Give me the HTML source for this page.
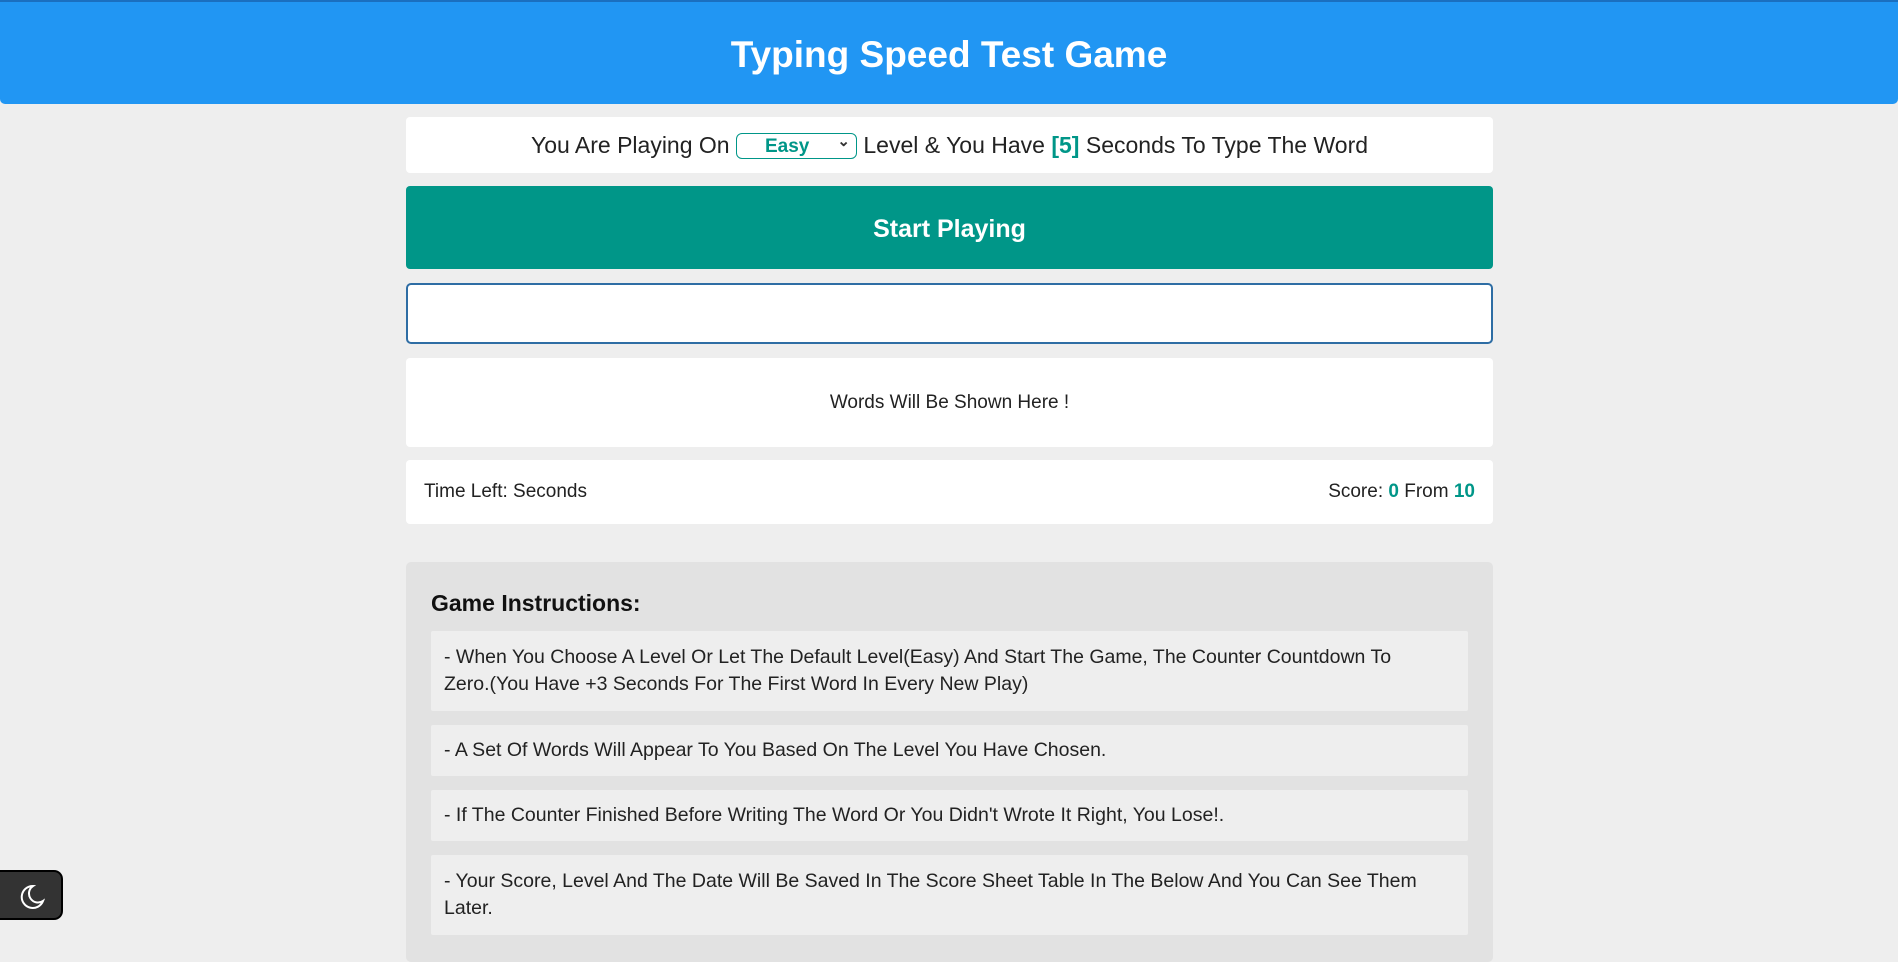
<!DOCTYPE html>
<html><head><style>
*{box-sizing:border-box;margin:0;padding:0}
body{width:1898px;height:944px;overflow:hidden;background:#eeeeee;font-family:"Liberation Sans",sans-serif;position:relative}
.hdr{height:104px;background:#2196f3;border-top:2px solid #1a6fc0;border-radius:0 0 5px 5px;color:#fff;text-align:center;font-weight:bold;font-size:37px;line-height:106px}
.c{position:absolute;left:406px;width:1087px}
.box{background:#fff;border-radius:4px}
.lvl{top:117px;height:56px;text-align:center;font-size:23px;line-height:56px;color:#222}
.sel{display:inline-block;width:121px;height:26px;border:1px solid #009688;border-radius:6px;color:#009688;font-weight:bold;font-size:19px;line-height:26px;vertical-align:middle;position:relative;text-align:left;padding-left:28px;margin-top:-2px}
.sel:after{content:"⌄";position:absolute;right:6px;top:-5px;font-size:15px;color:#333}
.g{color:#009688;font-weight:bold}
.btn{top:186px;height:83px;background:#009688;border-radius:4px;color:#fff;font-weight:bold;font-size:25px;text-align:center;line-height:86px}
.inp{top:283px;height:61px;background:#fff;border:2px solid #2e6da4;border-radius:5px}
.w{top:358px;height:89px;text-align:center;line-height:89px;font-size:19px;color:#222}
.st{top:460px;height:64px;line-height:64px;font-size:19px;color:#222;padding:0 18px}
.st span.r{float:right}
.ins{top:562px;height:400px;background:#e2e2e2;border-radius:5px;padding:0 25px}
.ins h3{font-size:23px;margin-top:28px;height:41px;color:#111}
.it{background:#eeeeee;margin-bottom:14px;padding:15px 13px;font-size:19.5px;line-height:27px;color:#222;border-radius:2px}
.tog{position:absolute;left:0;top:870px;width:63px;height:50px;background:#333;border:2px solid #000;border-left:none;border-radius:0 9px 9px 0}
</style></head><body>
<div class="hdr">Typing Speed Test Game</div>
<div class="c box lvl">You Are Playing On <span class="sel">Easy</span> Level &amp; You Have <span class="g">[5]</span> Seconds To Type The Word</div>
<div class="c btn">Start Playing</div>
<div class="c inp"></div>
<div class="c box w">Words Will Be Shown Here !</div>
<div class="c box st">Time Left: Seconds<span class="r">Score: <span class="g">0</span> From <span class="g">10</span></span></div>
<div class="c ins">
<h3>Game Instructions:</h3>
<div class="it" style="padding:13px">- When You Choose A Level Or Let The Default Level(Easy) And Start The Game, The Counter Countdown To<br>Zero.(You Have +3 Seconds For The First Word In Every New Play)</div>
<div class="it" style="padding:12px 13px">- A Set Of Words Will Appear To You Based On The Level You Have Chosen.</div>
<div class="it" style="padding:12px 13px">- If The Counter Finished Before Writing The Word Or You Didn't Wrote It Right, You Lose!.</div>
<div class="it" style="padding:13px">- Your Score, Level And The Date Will Be Saved In The Score Sheet Table In The Below And You Can See Them Later.</div>
</div>
<div class="tog"><svg width="63" height="48" viewBox="0 0 63 48"><path d="M33 14a11 11 0 1 0 10 15a9 9 0 0 1-10-15z" fill="none" stroke="#fff" stroke-width="2"/></svg></div>
</body></html>
